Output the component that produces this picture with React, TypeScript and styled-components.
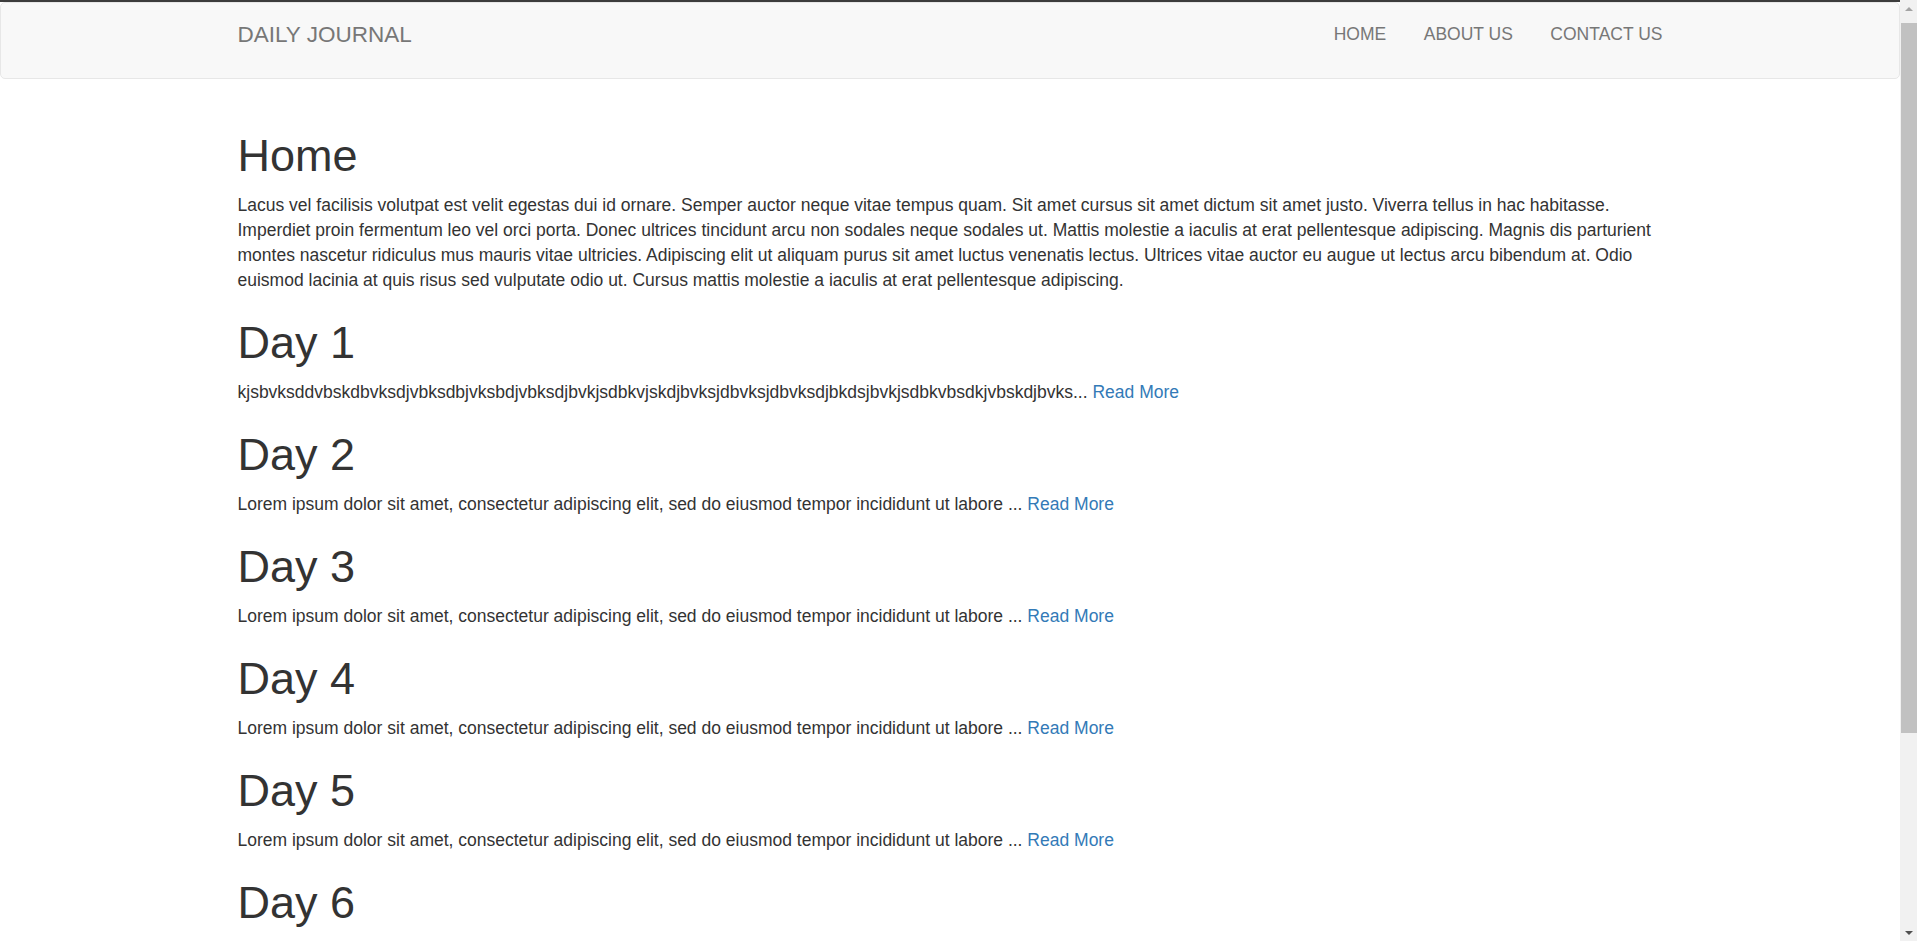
import React from "react";
import styled, { createGlobalStyle } from "styled-components";

const GlobalStyle = createGlobalStyle`
  html, body { overflow: hidden; }
  body {
    margin: 0;
    font-family: "Liberation Sans", Arial, Helvetica, sans-serif;
    font-size: 17.5px;
    line-height: 25px;
    color: #333333;
    background: #ffffff;
  }
  * { box-sizing: border-box; }
`;

const Frame = styled.div`
  display: flex;
  height: 941px;
  overflow: hidden;
`;

const Page = styled.div`
  flex: 1;
  min-width: 0;
  overflow: hidden;
`;

const ScrollRail = styled.div`
  width: 17px;
  flex: none;
  display: flex;
  flex-direction: column;
  background: #f1f1f1;
`;

const RailButton = styled.div`
  height: 17px;
  flex: none;
  display: flex;
  align-items: center;
  justify-content: center;
  padding-left: 1px;
`;

const Thumb = styled.div`
  height: 710px;
  margin: 6px 0 0 1px;
  background: #c1c1c1;
  flex: none;
`;

const RailSpacer = styled.div`
  flex: 1;
`;

const TopEdge = styled.div`
  height: 2px;
  background: #3c3c3c;
`;

const Navbar = styled.nav`
  height: 77px;
  margin-bottom: 25px;
  background: #f8f8f8;
  border: 1px solid #e7e7e7;
  border-radius: 5px;
`;

const Container = styled.div`
  width: 1462.5px;
  margin: 0 auto;
  padding: 0 18.75px;
`;

const NavInner = styled(Container)`
  display: flex;
  justify-content: space-between;
  align-items: flex-start;
`;

const Brand = styled.a`
  display: block;
  padding: 18.75px 0;
  font-size: 22.5px;
  line-height: 25px;
  color: #777777;
  text-decoration: none;
`;

const NavList = styled.ul`
  display: flex;
  list-style: none;
  margin: 0 -18.75px 0 0;
  padding: 0;
`;

const NavLink = styled.a`
  display: block;
  padding: 18.75px;
  font-size: 17.5px;
  line-height: 25px;
  color: #777777;
  text-decoration: none;
`;

const Main = styled(Container)`
  display: flex;
  flex-direction: column;
  gap: 23.5px;
  padding-top: 25px;
  padding-bottom: 12.5px;
`;

const Post = styled.section`
  display: flex;
  flex-direction: column;
  gap: 11px;
`;

const Title = styled.h1`
  margin: 0;
  padding-top: 1.5px;
  font-size: 45px;
  line-height: 49.5px;
  font-weight: 500;
  color: #333333;
`;

const Text = styled.p`
  margin: 0;
  padding-top: 1.5px;
  font-size: 17.5px;
  line-height: 25px;
`;

const ReadMore = styled.a`
  color: #337ab7;
  text-decoration: none;
`;

const homeText =
  "Lacus vel facilisis volutpat est velit egestas dui id ornare. Semper auctor neque vitae tempus quam. Sit amet cursus sit amet dictum sit amet justo. Viverra tellus in hac habitasse. Imperdiet proin fermentum leo vel orci porta. Donec ultrices tincidunt arcu non sodales neque sodales ut. Mattis molestie a iaculis at erat pellentesque adipiscing. Magnis dis parturient montes nascetur ridiculus mus mauris vitae ultricies. Adipiscing elit ut aliquam purus sit amet luctus venenatis lectus. Ultrices vitae auctor eu augue ut lectus arcu bibendum at. Odio euismod lacinia at quis risus sed vulputate odio ut. Cursus mattis molestie a iaculis at erat pellentesque adipiscing.";

const lorem =
  "Lorem ipsum dolor sit amet, consectetur adipiscing elit, sed do eiusmod tempor incididunt ut labore ...";

const posts: { title: string; body?: string }[] = [
  {
    title: "Day 1",
    body: "kjsbvksddvbskdbvksdjvbksdbjvksbdjvbksdjbvkjsdbkvjskdjbvksjdbvksjdbvksdjbkdsjbvkjsdbkvbsdkjvbskdjbvks...",
  },
  { title: "Day 2", body: lorem },
  { title: "Day 3", body: lorem },
  { title: "Day 4", body: lorem },
  { title: "Day 5", body: lorem },
  { title: "Day 6" },
];

const Arrow = ({ dir, color }: { dir: "up" | "down"; color: string }) => (
  <svg width="8" height="4" viewBox="0 0 8 4">
    <polygon points={dir === "up" ? "0,4 8,4 4,0" : "0,0 8,0 4,4"} fill={color} />
  </svg>
);

export default function App() {
  return (
    <>
      <GlobalStyle />
      <Frame>
        <Page>
          <TopEdge />
          <Navbar>
            <NavInner>
              <Brand href="#">DAILY JOURNAL</Brand>
              <NavList>
                <li><NavLink href="#">HOME</NavLink></li>
                <li><NavLink href="#">ABOUT US</NavLink></li>
                <li><NavLink href="#">CONTACT US</NavLink></li>
              </NavList>
            </NavInner>
          </Navbar>
          <Main>
            <Post>
              <Title>Home</Title>
              <Text>{homeText}</Text>
            </Post>
            {posts.map((p) => (
              <Post key={p.title}>
                <Title>{p.title}</Title>
                {p.body && (
                  <Text>
                    {p.body} <ReadMore href="#">Read More</ReadMore>
                  </Text>
                )}
              </Post>
            ))}
          </Main>
        </Page>
        <ScrollRail>
          <RailButton>
            <Arrow dir="up" color="#a3a3a3" />
          </RailButton>
          <Thumb />
          <RailSpacer />
          <RailButton>
            <Arrow dir="down" color="#505050" />
          </RailButton>
        </ScrollRail>
      </Frame>
    </>
  );
}
